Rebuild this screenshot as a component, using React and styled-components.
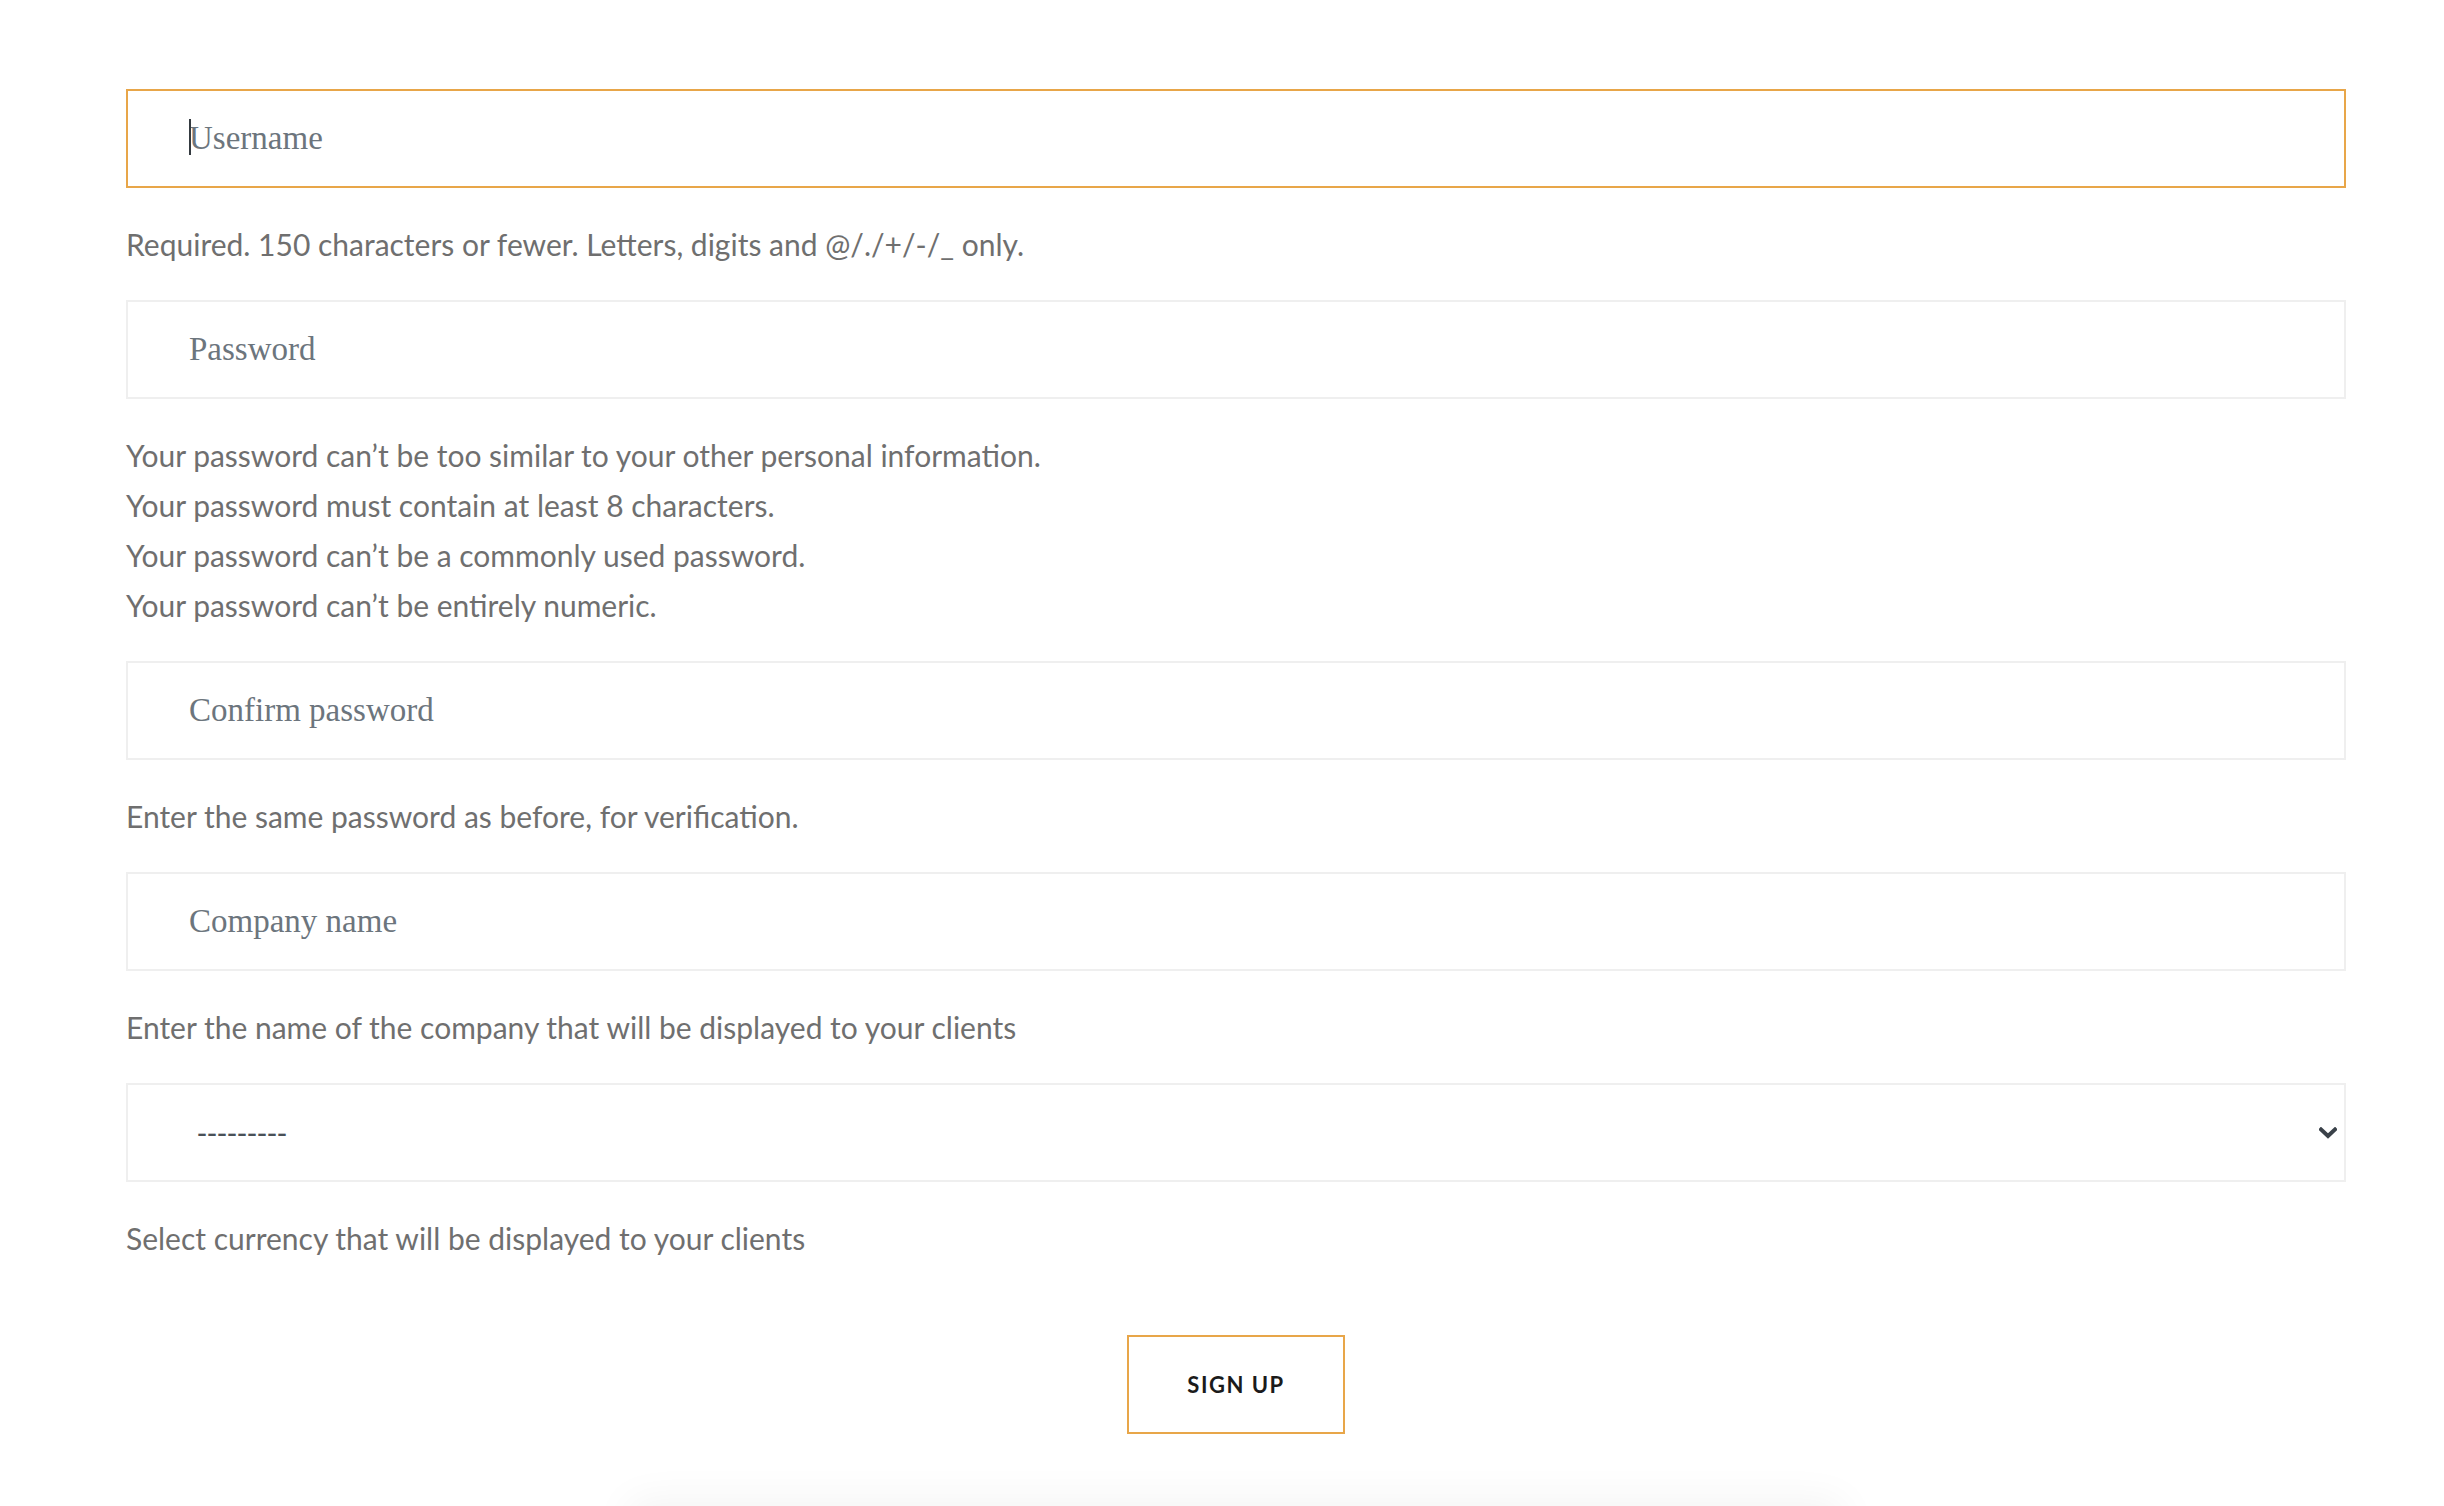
import React from "react";
import styled, { createGlobalStyle } from "styled-components";

const GlobalStyle = createGlobalStyle`
  html, body {
    margin: 0;
    padding: 0;
    background: #ffffff;
  }
  body {
    font-family: Lato, "Liberation Sans", sans-serif;
    overflow: hidden;
  }
  * { box-sizing: border-box; }
`;

const Page = styled.div`
  width: 2444px;
  height: 1506px;
  overflow: hidden;
  padding: 89px 98px 0 126px;
`;

const Form = styled.form`
  display: flex;
  flex-direction: column;
  width: 2220px;
`;

const FieldWrap = styled.div`
  position: relative;
  width: 100%;
`;

const TextInput = styled.input`
  display: block;
  width: 100%;
  height: 99px;
  margin: 0;
  padding: 0 61px;
  border: 2px solid ${(p) => (p.$active ? "#e8a649" : "#efefef")};
  border-radius: 0;
  background: #ffffff;
  outline: none;
  font-family: "Liberation Serif", "DejaVu Serif", serif;
  font-size: 33px;
  color: #495057;
  &::placeholder {
    color: #6c757d;
    opacity: 1;
  }
`;

const Caret = styled.span`
  position: absolute;
  left: 63px;
  top: 30px;
  width: 2px;
  height: 36px;
  background: #343a40;
`;

const Select = styled.select`
  display: block;
  width: 100%;
  height: 99px;
  margin: 0;
  padding: 0 60px 0 69px;
  border: 2px solid #efefef;
  border-radius: 0;
  background: #ffffff;
  outline: none;
  appearance: none;
  -webkit-appearance: none;
  font-family: "Liberation Sans", Arial, sans-serif;
  font-size: 30px;
  color: #495057;
`;

const Chevron = styled.svg`
  position: absolute;
  right: 9px;
  top: 44px;
  width: 18px;
  height: 12px;
  pointer-events: none;
`;

const Help = styled.div`
  margin: 31px 0 31px;
  font-family: Lato, "Liberation Sans", sans-serif;
  font-size: 30px;
  line-height: 50px;
  color: #6f6f6f;
`;

const HelpLine = styled.div``;

const ButtonRow = styled.div`
  display: flex;
  justify-content: center;
  margin-top: 41px;
`;

const SubmitButton = styled.button`
  width: 218px;
  height: 99px;
  border: 2px solid #e8a649;
  border-radius: 0;
  background: #ffffff;
  font-family: Lato, "Liberation Sans", sans-serif;
  font-weight: 700;
  font-size: 22px;
  letter-spacing: 1.5px;
  color: #1b1b1b;
  cursor: pointer;
`;

const FooterCard = styled.div`
  width: 1200px;
  height: 200px;
  margin: 74px auto 0;
  background: #ffffff;
  box-shadow: 0 0 40px 6px rgba(0, 0, 0, 0.055);
`;

export default function App() {
  return (
    <>
      <GlobalStyle />
      <Page>
        <Form onSubmit={(e) => e.preventDefault()}>
          <FieldWrap>
            <TextInput $active placeholder="Username" />
            <Caret />
          </FieldWrap>
          <Help>Required. 150 characters or fewer. Letters, digits and @/./+/-/_ only.</Help>

          <FieldWrap>
            <TextInput type="password" placeholder="Password" />
          </FieldWrap>
          <Help>
            <HelpLine>Your password can’t be too similar to your other personal information.</HelpLine>
            <HelpLine>Your password must contain at least 8 characters.</HelpLine>
            <HelpLine>Your password can’t be a commonly used password.</HelpLine>
            <HelpLine>Your password can’t be entirely numeric.</HelpLine>
          </Help>

          <FieldWrap>
            <TextInput type="password" placeholder="Confirm password" />
          </FieldWrap>
          <Help>Enter the same password as before, for verification.</Help>

          <FieldWrap>
            <TextInput placeholder="Company name" />
          </FieldWrap>
          <Help>Enter the name of the company that will be displayed to your clients</Help>

          <FieldWrap>
            <Select defaultValue="">
              <option value="">---------</option>
            </Select>
            <Chevron viewBox="0 0 18 12">
              <polyline
                points="2,2.5 9,9 16,2.5"
                fill="none"
                stroke="#3a4149"
                strokeWidth="4"
                strokeLinecap="square"
              />
            </Chevron>
          </FieldWrap>
          <Help>Select currency that will be displayed to your clients</Help>

          <ButtonRow>
            <SubmitButton type="submit">SIGN UP</SubmitButton>
          </ButtonRow>
        </Form>
        <FooterCard />
      </Page>
    </>
  );
}
